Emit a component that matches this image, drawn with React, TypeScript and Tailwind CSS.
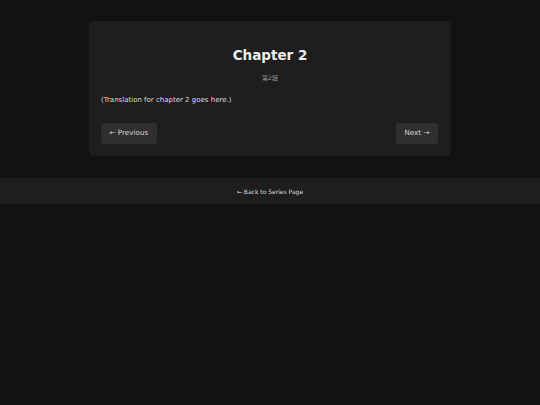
import React from "react";

export default function App() {
  return (
    <div className="min-h-[405px] w-full bg-[#121212] text-[#e0e0e0]" style={{ fontFamily: '"DejaVu Sans", "Noto Sans CJK JP", sans-serif' }}>
      <div className="pt-[21px] pb-[22px]">
        <div className="mx-auto w-[362px] rounded-[5px] bg-[#1e1e1e] px-[12px] pt-[25px] pb-[12px]">
          <h1 className="text-center text-[13.5px] font-bold leading-[18px] text-[#eeeeee]">Chapter 2</h1>
          <div className="mt-[10px] text-center text-[6px] leading-[8px] text-[#9a9a9a]">第2話</div>
          <p className="mt-[13px] text-[7px] leading-[10px] text-[#dddddd]">(Translation for chapter 2 goes here.)</p>
          <div className="mt-[18px] flex items-center justify-between pr-[1px]">
            <button className="h-[21px] rounded-[3px] bg-[#2f2f2f] px-[8.5px] text-[7.2px] text-[#d6d6d6]">← Previous</button>
            <button className="h-[21px] rounded-[3px] bg-[#2f2f2f] px-[8.5px] text-[7.2px] text-[#d6d6d6]">Next →</button>
          </div>
        </div>
      </div>
      <div className="flex h-[26px] items-center justify-center bg-[#1e1e1e]">
        <span className="text-[6px] text-[#dddddd]">← Back to Series Page</span>
      </div>
    </div>
  );
}
